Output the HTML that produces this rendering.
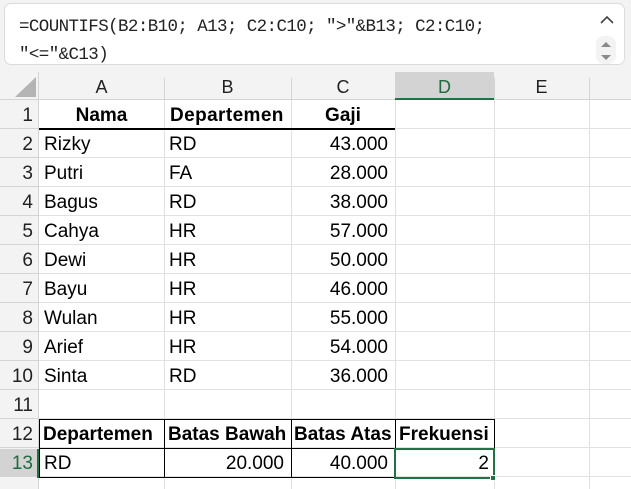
<!DOCTYPE html>
<html><head><meta charset="utf-8"><style>
*{margin:0;padding:0;box-sizing:border-box}
body{width:631px;height:489px;overflow:hidden;background:#fff;position:relative;font-family:"Liberation Sans",sans-serif;font-size:19px;color:#000}
.top{position:absolute;left:0;top:0;width:631px;height:100px;background:#f3f3f3}
.fbox{position:absolute;left:4px;top:3px;width:621px;height:62px;background:#fff;border:1px solid #dcdcdc;border-radius:7px}
.ftxt{position:absolute;left:14px;top:9px;font-family:"Liberation Mono",monospace;font-size:17.5px;letter-spacing:-0.6px;line-height:28px;color:#222;white-space:pre}
.hdr{position:absolute;top:72px;height:28px;line-height:30px;text-align:center;font-size:18px;color:#222}
.vl{position:absolute;width:1px;background:#e1e1e1}
.rows{position:absolute;left:0;top:100px;width:631px;height:389px;background:repeating-linear-gradient(to bottom,transparent 0,transparent 28px,#e1e1e1 28px,#e1e1e1 29px)}
.rh{position:absolute;left:0;width:39px;height:389px;top:100px;background:#f3f3f3;border-right:1px solid #d4d4d4}
.rn{position:absolute;left:0;width:33px;text-align:right;height:29px;line-height:31px;font-size:19px;color:#222}
.c{position:absolute;height:29px;line-height:31px;white-space:nowrap}
.b{font-weight:bold}
.r{text-align:right}
</style></head><body>
<div class="top"></div>
<div class="fbox">
<div class="ftxt">=COUNTIFS(B2:B10; A13; C2:C10; "&gt;"&amp;B13; C2:C10;
"&lt;="&amp;C13)</div>
<svg style="position:absolute;left:594px;top:10px" width="16" height="12"><path d="M2 9 L8 3 L14 9" stroke="#444" stroke-width="1.6" fill="none"/></svg>
<div style="position:absolute;left:591px;top:32px;width:20px;height:28px;background:#f3f3f3;border-radius:8px"></div>
<svg style="position:absolute;left:594px;top:34px" width="14" height="26"><path d="M2 9 L7 4 L12 9Z M2 17 L7 22 L12 17Z" fill="#8a8a8a"/></svg>
</div>
<div style="position:absolute;left:0;top:72px;width:39px;height:28px;background:#f3f3f3;border-right:1px solid #d4d4d4"></div>
<svg style="position:absolute;left:14px;top:76px" width="24" height="22"><path d="M22 1 L22 21 L1 21 Z" fill="#b4b4b4"/></svg>
<div class="hdr" style="left:39px;width:125px">A</div>
<div class="hdr" style="left:164px;width:127px">B</div>
<div class="hdr" style="left:291px;width:104px">C</div>
<div class="hdr" style="left:395px;width:99px;background:#d3d3d3;color:#1e6b41;border-bottom:2px solid #217346">D</div>
<div class="hdr" style="left:494px;width:95px">E</div>
<div class="vl" style="left:164px;top:78px;height:22px;background:#d4d4d4"></div>
<div class="vl" style="left:291px;top:78px;height:22px;background:#d4d4d4"></div>
<div class="vl" style="left:395px;top:78px;height:22px;background:#d4d4d4"></div>
<div class="vl" style="left:494px;top:78px;height:22px;background:#d4d4d4"></div>
<div class="vl" style="left:589px;top:78px;height:22px;background:#d4d4d4"></div>
<div style="position:absolute;left:0;top:99px;width:631px;height:1px;background:#d4d4d4"></div>
<div style="position:absolute;left:395px;top:98px;width:99px;height:2px;background:#217346"></div>

<div class="rows"></div>
<div class="vl" style="left:164px;top:100px;height:389px"></div>
<div class="vl" style="left:291px;top:100px;height:389px"></div>
<div class="vl" style="left:395px;top:100px;height:389px"></div>
<div class="vl" style="left:494px;top:100px;height:389px"></div>
<div class="vl" style="left:589px;top:100px;height:389px"></div>
<div class="rh"></div>
<div style="position:absolute;left:0;top:100px;width:39px;height:389px;background:repeating-linear-gradient(to bottom,transparent 0,transparent 28px,#d4d4d4 28px,#d4d4d4 29px)"></div>
<div style="position:absolute;left:0;top:449px;width:38px;height:28px;background:#d3d3d3"></div>
<div style="position:absolute;left:37px;top:449px;width:2px;height:29px;background:#217346"></div>

<div class="rn" style="top:100px">1</div>
<div class="rn" style="top:129px">2</div>
<div class="rn" style="top:158px">3</div>
<div class="rn" style="top:187px">4</div>
<div class="rn" style="top:216px">5</div>
<div class="rn" style="top:245px">6</div>
<div class="rn" style="top:274px">7</div>
<div class="rn" style="top:303px">8</div>
<div class="rn" style="top:332px">9</div>
<div class="rn" style="top:361px">10</div>
<div class="rn" style="top:390px">11</div>
<div class="rn" style="top:419px">12</div>
<div class="rn" style="top:448px;color:#1e6b41">13</div>

<div class="c b" style="top:100px;left:39px;width:125px;text-align:center">Nama</div>
<div class="c b" style="top:100px;left:170px;letter-spacing:0.4px">Departemen</div>
<div class="c b" style="top:100px;left:291px;width:104px;text-align:center">Gaji</div>
<div style="position:absolute;left:39px;top:128px;width:356px;height:2px;background:#000"></div>

<div class="c" style="top:129px;left:44px">Rizky</div><div class="c" style="top:129px;left:169px">RD</div><div class="c r" style="top:129px;left:291px;width:97px">43.000</div>
<div class="c" style="top:158px;left:44px">Putri</div><div class="c" style="top:158px;left:169px">FA</div><div class="c r" style="top:158px;left:291px;width:97px">28.000</div>
<div class="c" style="top:187px;left:44px">Bagus</div><div class="c" style="top:187px;left:169px">RD</div><div class="c r" style="top:187px;left:291px;width:97px">38.000</div>
<div class="c" style="top:216px;left:44px">Cahya</div><div class="c" style="top:216px;left:169px">HR</div><div class="c r" style="top:216px;left:291px;width:97px">57.000</div>
<div class="c" style="top:245px;left:44px">Dewi</div><div class="c" style="top:245px;left:169px">HR</div><div class="c r" style="top:245px;left:291px;width:97px">50.000</div>
<div class="c" style="top:274px;left:44px">Bayu</div><div class="c" style="top:274px;left:169px">HR</div><div class="c r" style="top:274px;left:291px;width:97px">46.000</div>
<div class="c" style="top:303px;left:44px">Wulan</div><div class="c" style="top:303px;left:169px">HR</div><div class="c r" style="top:303px;left:291px;width:97px">55.000</div>
<div class="c" style="top:332px;left:44px">Arief</div><div class="c" style="top:332px;left:169px">HR</div><div class="c r" style="top:332px;left:291px;width:97px">54.000</div>
<div class="c" style="top:361px;left:44px">Sinta</div><div class="c" style="top:361px;left:169px">RD</div><div class="c r" style="top:361px;left:291px;width:97px">36.000</div>

<div style="position:absolute;left:39px;top:419px;width:456px;height:59px;border:1px solid #000"></div>
<div style="position:absolute;left:39px;top:448px;width:456px;height:1px;background:#000"></div>
<div style="position:absolute;left:164px;top:419px;width:1px;height:59px;background:#000"></div>
<div style="position:absolute;left:291px;top:419px;width:1px;height:59px;background:#000"></div>
<div style="position:absolute;left:395px;top:419px;width:1px;height:59px;background:#000"></div>
<div class="c b" style="top:419px;left:43px">Departemen</div>
<div class="c b" style="top:419px;left:168px">Batas Bawah</div>
<div class="c b" style="top:419px;left:294px">Batas Atas</div>
<div class="c b" style="top:419px;left:399px">Frekuensi</div>
<div class="c" style="top:448px;left:44px">RD</div>
<div class="c r" style="top:448px;left:164px;width:120px">20.000</div>
<div class="c r" style="top:448px;left:291px;width:97px">40.000</div>
<div class="c r" style="top:448px;left:395px;width:94px">2</div>
<div style="position:absolute;left:394px;top:448px;width:101px;height:31px;border:2px solid #217346"></div>
<div style="position:absolute;left:490px;top:475px;width:6px;height:6px;background:#217346;border:1px solid #fff"></div>
</body></html>
